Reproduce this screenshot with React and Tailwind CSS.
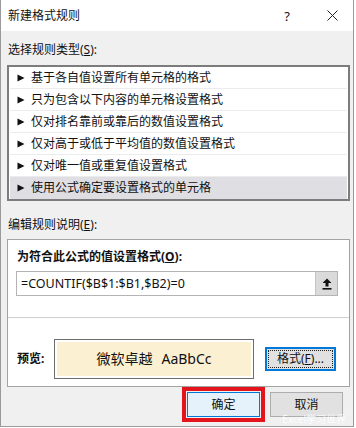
import React from 'react';

const rules = [
    '基于各自值设置所有单元格的格式',
    '只为包含以下内容的单元格设置格式',
    '仅对排名靠前或靠后的数值设置格式',
    '仅对高于或低于平均值的数值设置格式',
    '仅对唯一值或重复值设置格式',
    '使用公式确定要设置格式的单元格',
];

const Arrow = () => (
    <svg width="8" height="8" viewBox="0 0 8 8" className="shrink-0">
        <polygon points="0.5,0.5 7.5,4 0.5,7.5" fill="#111" />
    </svg>
);

const App = () => {
    return (
        <div className="w-[356px] h-[428px] bg-white overflow-hidden relative font-['Noto_Sans','Noto_Sans_CJK_SC',sans-serif] text-[12px] leading-[16px] text-[#111]">
            <div className="w-[354px] h-[427px] flex flex-col border-x border-b border-[#9a9a9a] bg-[#f0f0f0]">
                {/* Title bar */}
                <div className="h-[31px] shrink-0 bg-white flex items-center pl-[7px]">
                    <span className="text-[12px]">新建格式规则</span>
                    <span className="ml-auto mr-[37px] text-[13px]">?</span>
                    <svg width="11" height="11" viewBox="0 0 11 11" className="mr-[15px]">
                        <path d="M0.5 0.5 L10.5 10.5 M10.5 0.5 L0.5 10.5" stroke="#222" strokeWidth="1" />
                    </svg>
                </div>

                <div className="flex flex-col pl-[6px] pr-[3px]">
                    <div className="mt-[11px] pl-[1px]">
                        选择规则类型(<span className="underline">S</span>):
                    </div>

                    {/* Rule type list */}
                    <div className="mt-[7px] h-[136px] border-2 border-[#7c7c7c] bg-white px-px">
                        {rules.map((r, i) => (
                            <div
                                key={r}
                                className={`h-[22px] flex items-center gap-[6px] pl-[7px] ${i === rules.length - 1 ? 'bg-[#dfdee3]' : 'border-b border-[#ececec]'}`}
                            >
                                <Arrow />
                                <span>{r}</span>
                            </div>
                        ))}
                    </div>

                    <div className="mt-[16px] pl-[1px]">
                        编辑规则说明(<span className="underline">E</span>):
                    </div>

                    {/* Rule description */}
                    <div className="mt-[6px] h-[148px] border border-[#a3a3a3] bg-white flex flex-col">
                        <div className="mt-[9px] pl-[9px] font-bold">
                            为符合此公式的值设置格式(<span className="underline">O</span>):
                        </div>
                        <div className="mt-[6px] ml-[8px] w-[322px] h-[25px] border border-[#b4b4b4] flex">
                            <div className="flex-1 flex items-center pl-[4px] text-[12.5px]">=COUNTIF($B$1:$B1,$B2)=0</div>
                            <div className="w-[22px] bg-[#dadada] border-l border-[#c4c4c4] flex items-center justify-center">
                                <svg width="10" height="12" viewBox="0 0 10 12">
                                    <polygon points="5,0.5 9.5,5 6.5,5 6.5,8.5 3.5,8.5 3.5,5 0.5,5" fill="#111" />
                                    <rect x="0.5" y="10" width="9" height="1.6" fill="#111" />
                                </svg>
                            </div>
                        </div>
                        <div className="mt-[21px] h-px bg-[#cfcfcf]" />
                        <div className="mt-[21px] flex items-center pl-[9px]">
                            <span className="w-[37px] font-bold">预览:</span>
                            <div className="w-[200px] h-[40px] border border-[#6d6d6d] p-[2px]">
                                <div className="h-full bg-[#fcf0d2] flex items-center justify-center text-[14px] gap-[9px]">
                                    <span>微软卓越</span>
                                    <span>AaBbCc</span>
                                </div>
                            </div>
                            <div className="ml-[11px] w-[71px] h-[24px] border-2 border-[#0078d7] bg-[#e1e1e1] p-px">
                                <div className="h-full border border-dotted border-[#222] flex items-center justify-center">
                                    格式(<span className="underline">F</span>)...
                                </div>
                            </div>
                        </div>
                    </div>

                    {/* Buttons */}
                    <div className="flex items-center justify-end gap-[5px] pr-[7px]">
                        <div className="w-[83px] h-[35px] border-4 border-[#e3141c] p-px">
                            <div className="h-full border border-[#0078d7] bg-[#e5f1fb] flex items-center justify-center">确定</div>
                        </div>
                        <div className="w-[73px] h-[25px] border border-[#adadad] bg-[#e1e1e1] flex items-center justify-center">取消</div>
                    </div>
                </div>
            </div>
            <div className="absolute right-[10px] bottom-[3px] text-[10px] leading-[12px] text-white/80">Excel学习世界</div>
        </div>
    );
};

export default App;
